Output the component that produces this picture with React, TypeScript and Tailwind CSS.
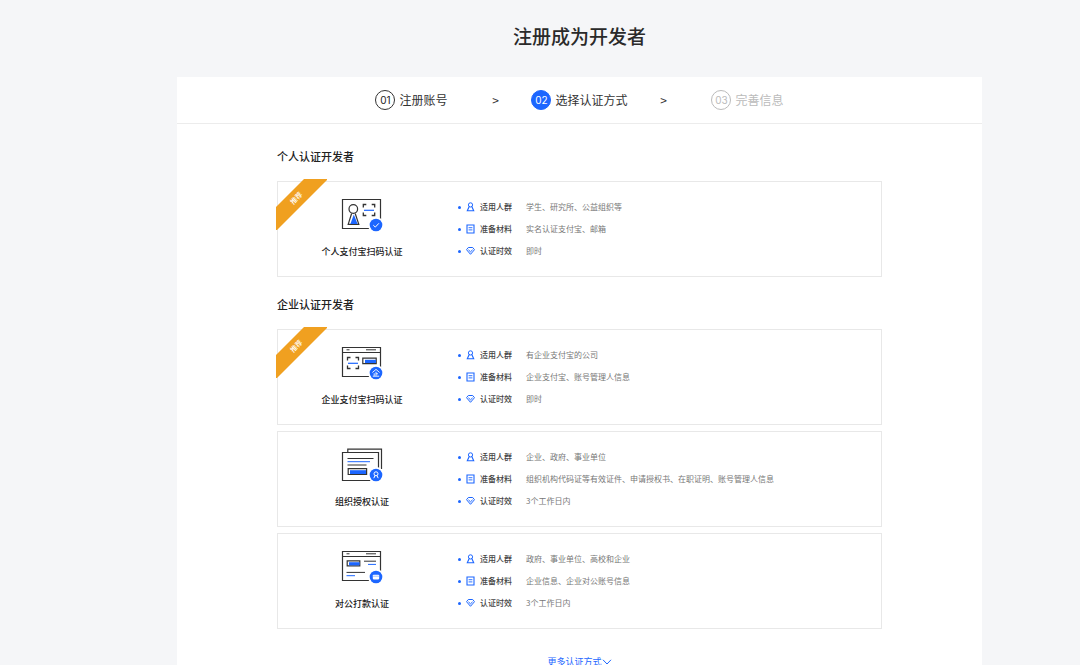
import type { FC, ReactNode } from "react";
import { Fragment } from "react";

const BLUE = "#1c66ff";
const INK = "#333333";

interface Method {
  title: string;
  icon: ReactNode;
  recommended?: boolean;
  people: string;
  materials: string;
  time: string;
}

/* Method illustrations */

const MethodSvg: FC<{ children: ReactNode }> = ({ children }) => (
  <svg width="42" height="36" viewBox="0 0 42 36" fill="none" aria-hidden="true">
    {children}
  </svg>
);

const Badge: FC<{ children: ReactNode }> = ({ children }) => (
  <>
    <circle cx="35" cy="28" r="8" fill="#fff" />
    <circle cx="35" cy="28" r="6.3" fill={BLUE} />
    {children}
  </>
);

const WindowFrame: FC = () => (
  <>
    <path d="M1.5 2.5h38v29h-38zM1.5 7.5h38" stroke={INK} strokeWidth="1.2" />
    <path d="M5.5 4.8h3M25 4.8h10" stroke={INK} />
  </>
);

const PersonalScanIcon: FC = () => (
  <MethodSvg>
    <path d="M1.5 2.5h38v29h-38z" stroke={INK} strokeWidth="1.2" />
    <circle cx="12.3" cy="12" r="4.3" stroke={INK} strokeWidth="1.2" />
    <path d="M10.6 16.5L7.2 27.4h10.6l-3.6-10.9" stroke={INK} strokeWidth="1.2" />
    <path d="M12.8 17.5l3.8 9.4H9.4z" fill={BLUE} />
    <path d="M22.3 10.5v-3h3M30.7 7.5h3v3M33.7 15.5v3h-3M25.3 18.5h-3v-3" stroke={INK} strokeWidth="1.3" />
    <path d="M23 13.3h10" stroke={BLUE} strokeWidth="1.2" />
    <Badge>
      <path d="M32.3 28.2l2 1.9 3.6-3.8" stroke="#fff" />
    </Badge>
  </MethodSvg>
);

const CompanyScanIcon: FC = () => (
  <MethodSvg>
    <WindowFrame />
    <path d="M6.5 15.5v-3h3M14.5 12.5h3v3M17.5 20.5v3h-3M9.5 23.5h-3v-3" stroke={INK} strokeWidth="1.3" />
    <path d="M7 18.3h10" stroke={BLUE} strokeWidth="1.2" />
    <path d="M21.8 13.2h13.4v5.4H21.8z" stroke={INK} strokeWidth="1.2" />
    <path d="M24 14.8h11v3.2H24z" fill={BLUE} />
    <Badge>
      <path d="M31.4 27.5L35 24.4l3.6 3.1M35 26.8v4M35 28.8h2M33.2 28.3v2.5M31.8 31.2h6.4" stroke="#fff" strokeWidth="0.9" />
    </Badge>
  </MethodSvg>
);

const OrganizationIcon: FC = () => (
  <MethodSvg>
    <path d="M6.8 5V2.2h33.7V22" stroke={INK} strokeWidth="1.2" />
    <path d="M1.5 5.5h36v28h-36z" fill="#fff" stroke={INK} strokeWidth="1.2" />
    <path d="M6.5 11.5h26" stroke={INK} />
    <path d="M6.5 14.7h22.5" stroke={BLUE} />
    <path d="M6.5 18h19" stroke={INK} />
    <path d="M7.2 21.7h18.4v5.8H7.2z" stroke={INK} strokeWidth="1.2" />
    <path d="M9 23.2h16v3.8H9z" fill={BLUE} />
    <Badge>
      <circle cx="35" cy="26.8" r="2" stroke="#fff" />
      <path d="M34 28.6l-1.2 2.6M36 28.6l1.2 2.6" stroke="#fff" />
    </Badge>
  </MethodSvg>
);

const TransferIcon: FC = () => (
  <MethodSvg>
    <WindowFrame />
    <path d="M6.2 11.8h12.6v5H6.2z" stroke={INK} strokeWidth="1.2" />
    <path d="M8 13.2h10.6v3.2H8z" fill={BLUE} />
    <path d="M23 12.2h12" stroke={INK} />
    <path d="M27 15.4h8M5.5 26.7h8.5" stroke={BLUE} />
    <path d="M5.5 23.4H24" stroke={INK} />
    <Badge>
      <rect x="31.8" y="25.8" width="6.4" height="4.6" rx="0.8" fill="#fff" />
      <path d="M32 27.2h6" stroke={BLUE} strokeWidth="0.4" />
    </Badge>
  </MethodSvg>
);

/* Row icons */

const PeopleIcon: FC = () => (
  <svg width="9" height="10" viewBox="0 0 9 10" fill="none" stroke={BLUE} aria-hidden="true">
    <circle cx="4.5" cy="2.9" r="2.1" />
    <path d="M3.2 4.6L1.3 8.8h6.4L5.8 4.6" strokeWidth="1.1" />
  </svg>
);

const MaterialsIcon: FC = () => (
  <svg width="9" height="10" viewBox="0 0 9 10" fill="none" stroke={BLUE} aria-hidden="true">
    <path d="M1 1h7v8H1z" strokeWidth="1.1" />
    <path d="M2.6 3.7h3.8M2.6 5.9h3.8" strokeWidth="0.9" />
  </svg>
);

const TimeIcon: FC = () => (
  <svg width="9" height="10" viewBox="0 0 9 10" fill="none" stroke={BLUE} aria-hidden="true">
    <path d="M2.3 1.5h4.4l1.8 2.2-4 4.6-4-4.6z" />
    <path d="M2.4 3.8l2.1 2 2.1-2" />
  </svg>
);

const steps = [
  { no: "01", label: "注册账号", circle: "border-[#333] text-[#222]", text: "text-[#333]" },
  { no: "02", label: "选择认证方式", circle: "border-[#1c66ff] bg-[#1c66ff] text-white", text: "text-[#333]" },
  { no: "03", label: "完善信息", circle: "border-[#bbb] text-[#bbb]", text: "text-[#bbb]" },
];

const groups: { title: string; methods: Method[] }[] = [
  {
    title: "个人认证开发者",
    methods: [
      {
        title: "个人支付宝扫码认证",
        icon: <PersonalScanIcon />,
        recommended: true,
        people: "学生、研究所、公益组织等",
        materials: "实名认证支付宝、邮箱",
        time: "即时",
      },
    ],
  },
  {
    title: "企业认证开发者",
    methods: [
      {
        title: "企业支付宝扫码认证",
        icon: <CompanyScanIcon />,
        recommended: true,
        people: "有企业支付宝的公司",
        materials: "企业支付宝、账号管理人信息",
        time: "即时",
      },
      {
        title: "组织授权认证",
        icon: <OrganizationIcon />,
        people: "企业、政府、事业单位",
        materials: "组织机构代码证等有效证件、申请授权书、在职证明、账号管理人信息",
        time: "3个工作日内",
      },
      {
        title: "对公打款认证",
        icon: <TransferIcon />,
        people: "政府、事业单位、高校和企业",
        materials: "企业信息、企业对公账号信息",
        time: "3个工作日内",
      },
    ],
  },
];

const Ribbon: FC = () => (
  <div className="absolute -left-[3px] -top-1 h-[52px] w-[52px]">
    <svg width="52" height="52" viewBox="0 0 52 52" aria-hidden="true">
      <path d="M29 1h23v1L2 52H1V29z" fill="#f0a020" />
    </svg>
    <span className="absolute left-[11px] top-[14px] w-5 -rotate-45 text-center text-[7px] leading-[12px] font-medium text-white">
      推荐
    </span>
  </div>
);

const InfoRow: FC<{ icon: ReactNode; label: string; value: string }> = ({ icon, label, value }) => (
  <li className="flex h-[22px] items-center text-[8px]">
    <span className="mr-[5px] h-[3px] w-[3px] rounded-full bg-[#1c66ff]" />
    {icon}
    <span className="ml-[5px] w-[46px] font-medium text-[#444]">{label}</span>
    <span className="text-[#777]">{value}</span>
  </li>
);

const MethodCard: FC<{ method: Method }> = ({ method }) => (
  <article className="relative flex h-24 border border-[#e8e8e8] bg-white">
    {method.recommended && <Ribbon />}
    <div className="flex w-[168px] flex-col items-center pt-[15px]">
      {method.icon}
      <h3 className="mt-[11px] text-[9px] leading-4 font-medium text-[#222]">{method.title}</h3>
    </div>
    <ul className="flex-1 pt-[14px] pl-3">
      <InfoRow icon={<PeopleIcon />} label="适用人群" value={method.people} />
      <InfoRow icon={<MaterialsIcon />} label="准备材料" value={method.materials} />
      <InfoRow icon={<TimeIcon />} label="认证时效" value={method.time} />
    </ul>
  </article>
);

const App: FC = () => {
  return (
    <div className="min-h-screen bg-[#f5f6f8] pr-[98px] pl-[177px] font-['Noto_Sans_CJK_SC',sans-serif]">
      <h1 className="pt-[22px] pb-[27px] text-center text-[19px] leading-7 font-medium text-[#2a2a2a]">
        注册成为开发者
      </h1>

      <main className="bg-white">
        {/* Steps */}
        <ol className="flex h-[47px] items-center justify-center border-b border-[#ececec]">
          {steps.map((step, index) => (
            <Fragment key={step.no}>
              {index > 0 && (
                <li aria-hidden="true" className="flex w-2 justify-center text-[12px] text-[#333]">
                  &gt;
                </li>
              )}
              <li className="flex w-[160px] items-center justify-center gap-1">
                <span
                  className={`flex h-5 w-5 items-center justify-center rounded-full border font-['Inter',sans-serif] text-[10px] ${step.circle}`}
                >
                  {step.no}
                </span>
                <span className={`text-[12px] leading-4 ${step.text}`}>{step.label}</span>
              </li>
            </Fragment>
          ))}
        </ol>

        <div className="px-[100px] pt-6 pb-10">
          {groups.map((group) => (
            <section key={group.title} className="mb-[19px]">
              <h2 className="mb-[17px] text-[11px] leading-4 font-medium text-[#222]">{group.title}</h2>
              <div className="flex flex-col gap-[6px]">
                {group.methods.map((method) => (
                  <MethodCard key={method.title} method={method} />
                ))}
              </div>
            </section>
          ))}

          <div className="flex justify-center pt-[6px]">
            <a href="#more" className="flex items-center text-[9px] leading-4 text-[#1c66ff]">
              更多认证方式
              <svg width="10" height="8" viewBox="0 0 10 8" fill="none" stroke="currentColor" aria-hidden="true">
                <path d="M1 1.8L5 6l4-4.2" />
              </svg>
            </a>
          </div>
        </div>
      </main>
    </div>
  );
};

export default App;
